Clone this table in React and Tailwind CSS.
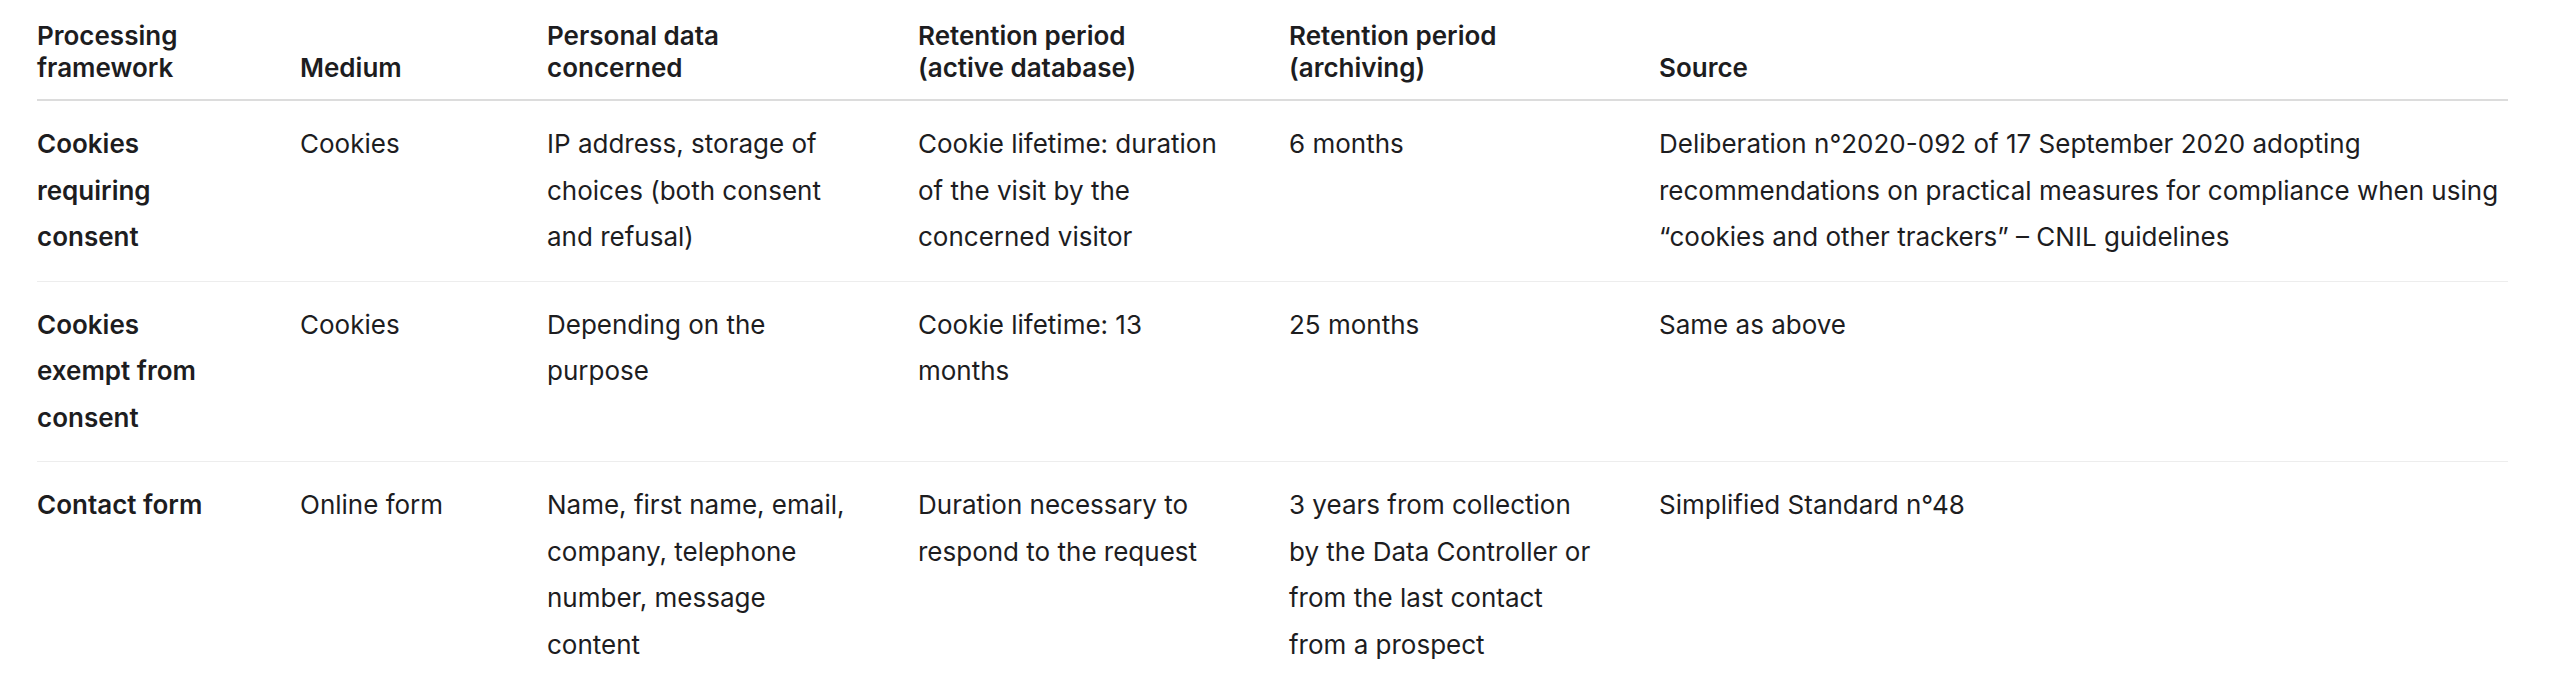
import React from 'react'

const rows = [
  {
    framework: 'Cookies requiring consent',
    medium: 'Cookies',
    data: 'IP address, storage of choices (both consent and refusal)',
    active: 'Cookie lifetime: duration of the visit by the concerned visitor',
    archive: '6 months',
    source: 'Deliberation n°2020-092 of 17 September 2020 adopting recommendations on practical measures for compliance when using “cookies and other trackers” – CNIL guidelines',
  },
  {
    framework: 'Cookies exempt from consent',
    medium: 'Cookies',
    data: 'Depending on the purpose',
    active: 'Cookie lifetime: 13 months',
    archive: '25 months',
    source: 'Same as above',
  },
  {
    framework: 'Contact form',
    medium: 'Online form',
    data: 'Name, first name, email, company, telephone number, message content',
    active: 'Duration necessary to respond to the request',
    archive: '3 years from collection by the Data Controller or from the last contact from a prospect',
    source: 'Simplified Standard n°48',
  },
]

const headers = [
  ['Processing', 'framework'],
  ['Medium'],
  ['Personal data', 'concerned'],
  ['Retention period', '(active database)'],
  ['Retention period', '(archiving)'],
  ['Source'],
]

// right padding per column, tuned so the cells wrap like the original
const pad = ['pr-[78px]', 'pr-[44px]', 'pr-[64px]', 'pr-[60px]', 'pr-[60px]', 'pr-0']

export default function App() {
  return (
    <div className="min-h-screen bg-white pl-[37px] pt-[20px] text-[#1d1d1f] text-[26px]" style={{ fontFamily: 'Inter, "Noto Sans", sans-serif' }}>
      <table className="w-[2471px] table-fixed border-collapse">
        <colgroup>
          <col className="w-[263px]" />
          <col className="w-[247px]" />
          <col className="w-[371px]" />
          <col className="w-[371px]" />
          <col className="w-[370px]" />
          <col className="w-[849px]" />
        </colgroup>
        <thead>
          <tr className="border-b-2 border-[#dcdcdc]">
            {headers.map((h, i) => (
              <th key={i} className={`text-left align-bottom font-semibold leading-[32px] pb-[15px] ${pad[i]}`}>
                {h.map((line, j) => (
                  <span key={j} className="block">{line}</span>
                ))}
              </th>
            ))}
          </tr>
        </thead>
        <tbody>
          {rows.map((r, i) => (
            <tr key={i} className="border-b border-[#ededed] last:border-b-0">
              <td className={`align-top font-semibold leading-[46.5px] py-[20px] ${pad[0]}`}>{r.framework}</td>
              <td className={`align-top leading-[46.5px] py-[20px] ${pad[1]}`}>{r.medium}</td>
              <td className={`align-top leading-[46.5px] py-[20px] ${pad[2]}`}>{r.data}</td>
              <td className={`align-top leading-[46.5px] py-[20px] ${pad[3]}`}>{r.active}</td>
              <td className={`align-top leading-[46.5px] py-[20px] ${pad[4]}`}>{r.archive}</td>
              <td className={`align-top leading-[46.5px] py-[20px] ${pad[5]}`}>{r.source}</td>
            </tr>
          ))}
        </tbody>
      </table>
    </div>
  )
}
